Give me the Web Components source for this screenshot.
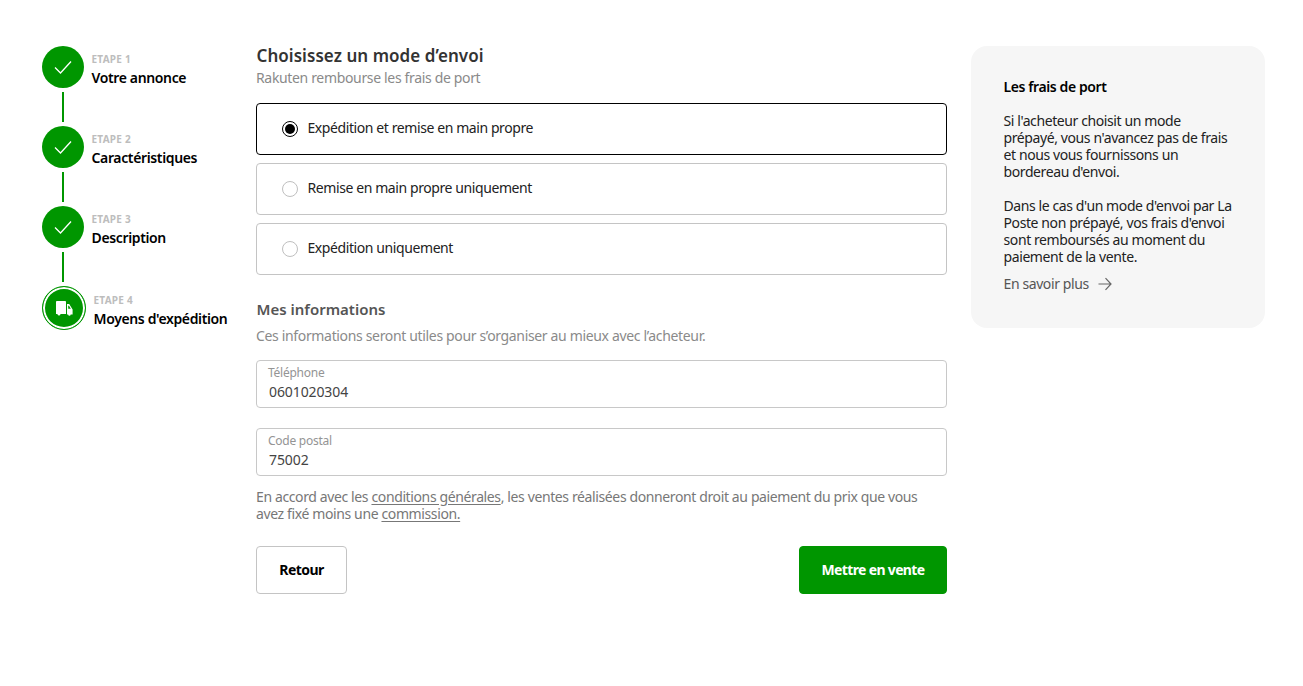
<!DOCTYPE html>
<html lang="fr">
<head>
<meta charset="utf-8">
<title>Mode d'envoi</title>
<style>
    body {
        margin: 0;
        background: #fff;
        font-family: "Noto Sans", "Open Sans", sans-serif;
        font-size: 14px;
        color: #222;
    }
</style>
</head>
<body>
<sell-page></sell-page>

<script>
const check = `<svg width="20" height="20" viewBox="0 0 20 20" fill="none" stroke="#fff" stroke-width="1.3"><path d="M2 10.5 L7.5 16 L18 4.5"/></svg>`;
const truck = `<svg width="20" height="20" viewBox="0 0 20 20" fill="#fff">
    <path d="M2 3.8a.8.8 0 0 1 .8-.8h8.4a.8.8 0 0 1 .8.8V16H2z"/>
    <circle cx="5" cy="16.3" r="1.3"/>
    <path fill-rule="evenodd" d="M13 6h2.2l3.4 5.4v5.1H13zM14.2 7.8v3h2.6l-1.8-3z"/>
    <circle cx="15.4" cy="16.6" r="1.2"/>
</svg>`;

class StepItem extends HTMLElement {
    constructor() {
        super();
        const current = this.hasAttribute("current");
        const last = this.hasAttribute("last");
        this.shadow = this.attachShadow({ mode: "open" });
        this.shadow.innerHTML = `
            <style>
                :host {
                    display: grid;
                    grid-template-columns: auto 1fr;
                    column-gap: 8px;
                    height: ${ last ? "auto" : "80px" };
                }
                #left {
                    display: flex;
                    flex-direction: column;
                    align-items: center;
                    width: ${ current ? "44px" : "42px" };
                }
                #dot {
                    box-sizing: border-box;
                    width: 100%;
                    height: ${ current ? "44px" : "42px" };
                    border-radius: 50%;
                    background: #009600;
                    display: flex;
                    align-items: center;
                    justify-content: center;
                    ${ current ? "border: 1px solid #009600; box-shadow: inset 0 0 0 2px #fff;" : "" }
                }
                #line {
                    width: 2px;
                    height: 30px;
                    margin-top: 4px;
                    background: #009600;
                }
                #label {
                    padding-top: ${ current ? "7px" : "6px" };
                    margin-left: -0.5px;
                }
                #step {
                    font-size: 10px;
                    line-height: 14px;
                    font-weight: 700;
                    color: #bdbdbd;
                    letter-spacing: 0.25px;
                }
                #name {
                    font-size: 14px;
                    line-height: 20px;
                    font-weight: 600;
                    color: #000;
                    letter-spacing: -0.36px;
                    white-space: nowrap;
                    margin-top: 2px;
                }
            </style>
            <div id="left">
                <div id="dot">${ current ? truck : check }</div>
                ${ last ? "" : `<div id="line"></div>` }
            </div>
            <div id="label">
                <div id="step">${ this.getAttribute("step") }</div>
                <div id="name"><slot></slot></div>
            </div>
        `;
    }
}
customElements.define("step-item", StepItem);

class RadioCard extends HTMLElement {
    constructor() {
        super();
        const checked = this.hasAttribute("checked");
        this.shadow = this.attachShadow({ mode: "open" });
        this.shadow.innerHTML = `
            <style>
                :host {
                    display: flex;
                    align-items: center;
                    box-sizing: border-box;
                    height: 52px;
                    padding-left: 25px;
                    border: 1px solid ${ checked ? "#000" : "#c4c4c4" };
                    border-radius: 4px;
                    color: #222;
                    font-size: 14px;
                    letter-spacing: -0.41px;
                }
                #radio {
                    box-sizing: border-box;
                    width: 16px;
                    height: 16px;
                    margin-right: 9.5px;
                    border-radius: 50%;
                    border: 1px solid ${ checked ? "#000" : "#bfbfbf" };
                    display: flex;
                    align-items: center;
                    justify-content: center;
                }
                #radio i {
                    display: ${ checked ? "block" : "none" };
                    width: 10px;
                    height: 10px;
                    border-radius: 50%;
                    background: #000;
                }
                #text {
                    margin-bottom: 4px;
                }
            </style>
            <div id="radio"><i></i></div>
            <span id="text"><slot></slot></span>
        `;
    }
}
customElements.define("radio-card", RadioCard);

class TextField extends HTMLElement {
    constructor() {
        super();
        this.shadow = this.attachShadow({ mode: "open" });
        this.shadow.innerHTML = `
            <style>
                :host {
                    display: block;
                    box-sizing: border-box;
                    height: 48px;
                    padding: 4px 11px 0;
                    border: 1px solid #c8c8c8;
                    border-radius: 4px;
                }
                #label {
                    font-size: 12px;
                    line-height: 16px;
                    color: #949494;
                    letter-spacing: -0.25px;
                }
                #value {
                    font-size: 14px;
                    line-height: 20px;
                    color: #444;
                    margin: 1px 0 0 1px;
                    letter-spacing: -0.1px;
                }
            </style>
            <div id="label">${ this.getAttribute("label") }</div>
            <div id="value"><slot></slot></div>
        `;
    }
}
customElements.define("text-field", TextField);

class ActionButton extends HTMLElement {
    constructor() {
        super();
        const primary = this.hasAttribute("primary");
        this.shadow = this.attachShadow({ mode: "open" });
        this.shadow.innerHTML = `
            <style>
                :host {
                    display: flex;
                    align-items: center;
                    justify-content: center;
                    box-sizing: border-box;
                    height: 48px;
                    width: ${ primary ? "148px" : "91px" };
                    padding-bottom: 2px;
                    border-radius: 4px;
                    font-size: 14px;
                    font-weight: 700;
                    letter-spacing: ${ primary ? "-0.65px" : "-0.55px" };
                    color: ${ primary ? "#fff" : "#000" };
                    background: ${ primary ? "#009600" : "#fff" };
                    border: 1px solid ${ primary ? "#009600" : "#c4c4c4" };
                }
            </style>
            <slot></slot>
        `;
    }
}
customElements.define("action-button", ActionButton);

class InfoPanel extends HTMLElement {
    constructor() {
        super();
        this.shadow = this.attachShadow({ mode: "open" });
        this.shadow.innerHTML = `
            <style>
                :host {
                    display: block;
                    box-sizing: border-box;
                    width: 294px;
                    height: 282px;
                    padding: 32px 29px 32px 32.5px;
                    background: #f6f6f6;
                    border-radius: 16px;
                    font-size: 14px;
                    line-height: 17px;
                    color: #222;
                    letter-spacing: -0.4px;
                }
                h3 {
                    margin: 0 0 16px;
                    font-size: 14px;
                    line-height: 18px;
                    font-weight: 600;
                    color: #000;
                }
                p {
                    margin: 0 0 17px;
                }
                #more {
                    display: flex;
                    align-items: center;
                    gap: 9px;
                    margin-top: -7px;
                    color: #555;
                }
            </style>
            <h3>Les frais de port</h3>
            <p>Si l'acheteur choisit un mode prépayé, vous n'avancez pas de frais et nous vous fournissons un bordereau d'envoi.</p>
            <p>Dans le cas d'un mode d'envoi par La Poste non prépayé, vos frais d'envoi sont remboursés au moment du paiement de la vente.</p>
            <div id="more">En savoir plus
                <svg width="14" height="14" viewBox="0 0 14 14" fill="none" stroke="#666" stroke-width="1.2"><path d="M0.5 7H13M7.5 1.2L13 7l-5.5 5.8"/></svg>
            </div>
        `;
    }
}
customElements.define("info-panel", InfoPanel);

class SellPage extends HTMLElement {
    constructor() {
        super();
        this.shadow = this.attachShadow({ mode: "open" });
        this.shadow.innerHTML = `
            <style>
                :host {
                    display: grid;
                    grid-template-columns: 214px 691px 294px;
                    column-gap: 0;
                    padding: 46px 0 0 42px;
                    align-items: start;
                }
                main {
                    display: flex;
                    flex-direction: column;
                }
                h2 {
                    margin: 0 0 2px;
                    font-size: 17px;
                    line-height: 20px;
                    font-weight: 600;
                    color: #333;
                    letter-spacing: 0.05px;
                    padding-left: 0.5px;
                }
                .sub {
                    font-size: 14px;
                    line-height: 20px;
                    color: #8a8a8a;
                    letter-spacing: -0.34px;
                }
                #cards {
                    display: flex;
                    flex-direction: column;
                    gap: 8px;
                    margin-top: 15px;
                }
                h3 {
                    margin: 24px 0 7px;
                    padding-left: 0.5px;
                    font-size: 15px;
                    line-height: 20px;
                    font-weight: 600;
                    color: #555;
                }
                #fields {
                    display: flex;
                    flex-direction: column;
                    gap: 20px;
                    margin-top: 14px;
                }
                #terms {
                    margin-top: 12px;
                    font-size: 14px;
                    line-height: 17px;
                    color: #777;
                    letter-spacing: -0.38px;
                }
                #terms u {
                    text-underline-offset: 2px;
                }
                #actions {
                    display: flex;
                    justify-content: space-between;
                    margin-top: 24px;
                }
                aside {
                    margin-left: 24px;
                }
            </style>
            <div id="steps">
                <step-item step="ETAPE 1">Votre annonce</step-item>
                <step-item step="ETAPE 2">Caractéristiques</step-item>
                <step-item step="ETAPE 3">Description</step-item>
                <step-item step="ETAPE 4" current last>Moyens d'expédition</step-item>
            </div>
            <main>
                <h2>Choisissez un mode d’envoi</h2>
                <div class="sub">Rakuten rembourse les frais de port</div>
                <div id="cards">
                    <radio-card checked>Expédition et remise en main propre</radio-card>
                    <radio-card>Remise en main propre uniquement</radio-card>
                    <radio-card>Expédition uniquement</radio-card>
                </div>
                <h3>Mes informations</h3>
                <div class="sub">Ces informations seront utiles pour s’organiser au mieux avec l’acheteur.</div>
                <div id="fields">
                    <text-field label="Téléphone">0601020304</text-field>
                    <text-field label="Code postal">75002</text-field>
                </div>
                <div id="terms">En accord avec les <u>conditions générales</u>, les ventes réalisées donneront droit au paiement du prix que vous<br>avez fixé moins une <u>commission.</u></div>
                <div id="actions">
                    <action-button>Retour</action-button>
                    <action-button primary>Mettre en vente</action-button>
                </div>
            </main>
            <aside><info-panel></info-panel></aside>
        `;
    }
}
customElements.define("sell-page", SellPage);
</script>
</body>
</html>
